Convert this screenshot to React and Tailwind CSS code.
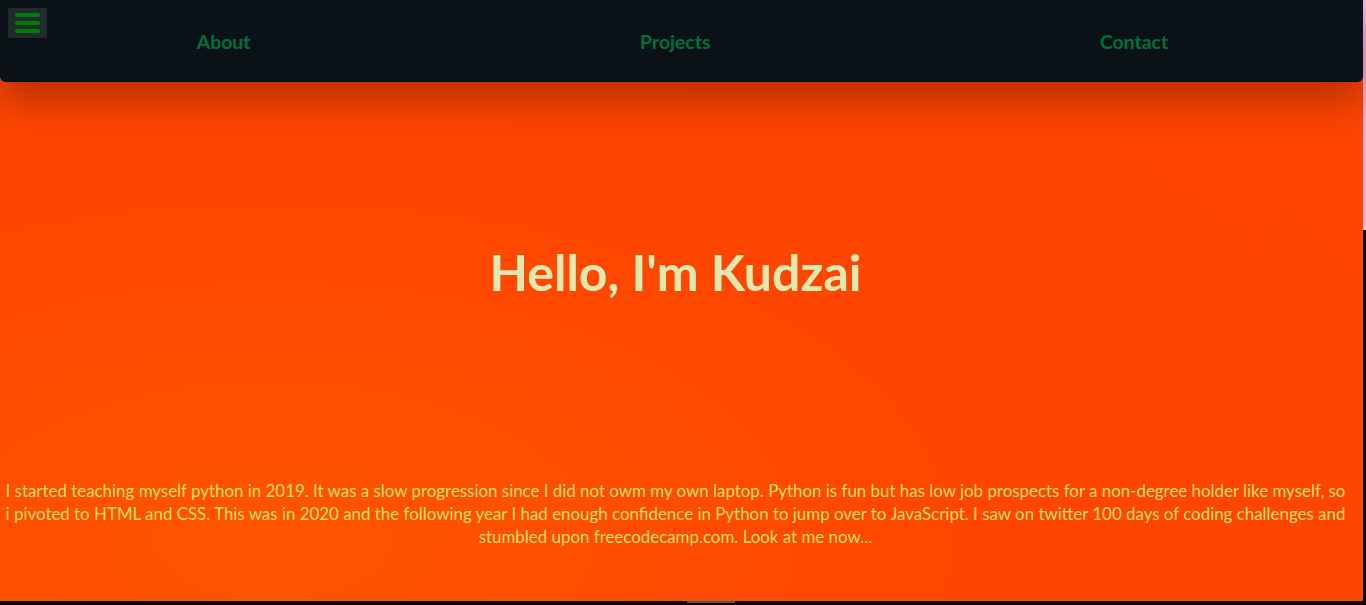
const links = ['About', 'Projects', 'Contact'];

const App = () => {
    return (
        <div className="flex w-[1366px] h-[605px] overflow-hidden bg-black" style={{ fontFamily: 'Lato, "Open Sans", sans-serif' }}>
            <div className="flex flex-col w-[1363px] h-[603px]">
                <div className="relative flex flex-col h-full bg-[radial-gradient(ellipse_at_20%_90%,#ff5500_0%,#ff4600_45%,#ff4500_100%)]">
                    {/* Navbar */}
                    <header className="relative z-10 h-[82px] bg-[#0a1217] rounded-b-md border-b border-[#050a10] shadow-[0_18px_40px_rgba(120,30,0,0.55)]">
                        <button className="absolute left-2 top-2 w-[39px] h-[30px] bg-[#222b2b] flex flex-col items-center justify-center gap-1">
                            <span className="block w-[25px] h-1 rounded-full bg-[#008000]"></span>
                            <span className="block w-[25px] h-1 rounded-full bg-[#008000]"></span>
                            <span className="block w-[25px] h-1 rounded-full bg-[#008000]"></span>
                        </button>
                        <ul className="flex justify-around items-center h-full pt-[2px] pl-[2px]">
                            {links.map((link) => (
                                <li key={link}>
                                    <a href="#" className="text-[19.4px] font-bold text-[#00703c]">{link}</a>
                                </li>
                            ))}
                        </ul>
                    </header>

                    {/* Hero */}
                    <section className="flex flex-col items-center text-center pl-[4px] pr-[16px]">
                        <h1 className="mt-[158px] text-[50px] leading-[64px] font-bold text-[#e1e8b0]">Hello, I'm Kudzai</h1>
                        <p className="mt-[175px] text-[16.9px] leading-[23px] text-[#f6de68]">
                            I started teaching myself python in 2019. It was a slow progression since I did not owm my own laptop. Python is fun but has low job prospects for a non-degree holder like myself, so i pivoted to HTML and CSS. This was in 2020 and the following year I had enough confidence in Python to jump over to JavaScript. I saw on twitter 100 days of coding challenges and stumbled upon freecodecamp.com. Look at me now...
                        </p>
                    </section>
                </div>
                <div className="flex h-[2px] bg-[#0d0806]">
                    <div className="w-[687px]"></div>
                    <div className="w-[48px] bg-[#5a5550]"></div>
                </div>
            </div>
            <div className="flex flex-col w-[3px]">
                <div className="h-[230px] bg-[#f4b8ee]"></div>
                <div className="flex-1 bg-black"></div>
            </div>
        </div>
    );
};

export default App;
